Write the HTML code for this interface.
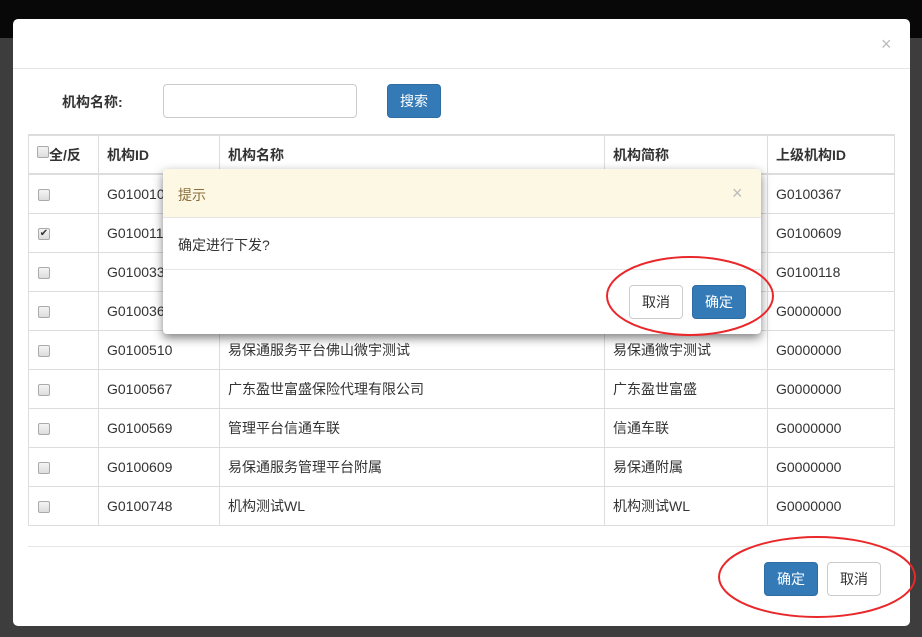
<!DOCTYPE html>
<html><head><meta charset="utf-8"><style>
*{box-sizing:border-box;margin:0;padding:0}
body{width:922px;height:637px;overflow:hidden;background:#3d3d3d;font-family:"Liberation Sans","Noto Sans CJK SC",sans-serif;font-size:14px;color:#333;position:relative}
.top{position:absolute;left:0;top:0;width:922px;height:38px;background:#080808}
.modal{position:absolute;left:13px;top:19px;width:897px;height:607px;background:#fff;border-radius:5px}
.abs{position:absolute}
.btn{position:absolute;height:34px;border-radius:4px;font-size:14px;text-align:center;line-height:32px;border:1px solid #ccc;background:#fff;color:#333}
.btn.p{background:#337ab7;border-color:#2e6da4;color:#fff}
table{position:absolute;left:28px;top:134px;border-collapse:collapse;width:867px}
td,th{border:1px solid #ddd;height:39px;padding:0 8px;text-align:left;font-weight:normal;white-space:nowrap;overflow:hidden}
th{font-weight:bold;border-top:2px solid #ddd;border-bottom:2px solid #ddd}
.cb{display:inline-block;width:12px;height:12px;border:1px solid #aaa;border-radius:2px;background:linear-gradient(#f4f4f4,#ddd);vertical-align:middle;position:relative;margin-left:1px}
.dlg{position:absolute;left:163px;top:169px;width:598px;height:165px;background:#fff;border-radius:4px;box-shadow:0 4px 10px rgba(0,0,0,.5);overflow:hidden}
</style></head><body>
<div class="top"></div>
<div class="modal"></div>
<div class="abs" style="left:13px;top:68px;width:897px;height:1px;background:#e5e5e5"></div>
<div class="abs" style="left:881px;top:34px;color:#bbb;font-size:18px">×</div>
<div class="abs" style="left:62px;top:92px;font-weight:bold">机构名称:</div>
<div class="abs" style="left:163px;top:84px;width:194px;height:34px;border:1px solid #ccc;border-radius:4px"></div>
<div class="btn p" style="left:387px;top:84px;width:54px">搜索</div>
<table>
<tr><th style="width:70px;padding:0 0 0 8px"><span class="cb" style="vertical-align:2px;margin-left:0"></span>全/反</th><th style="width:121px">机构ID</th><th style="width:385px">机构名称</th><th style="width:163px">机构简称</th><th>上级机构ID</th></tr>
<tr><td><span class="cb"></span></td><td>G0100101</td><td></td><td></td><td>G0100367</td></tr>
<tr><td><span class="cb" style="font-size:10px;line-height:10px;text-align:center">✔</span></td><td>G0100111</td><td></td><td></td><td>G0100609</td></tr>
<tr><td><span class="cb"></span></td><td>G0100331</td><td></td><td></td><td>G0100118</td></tr>
<tr><td><span class="cb"></span></td><td>G0100361</td><td></td><td></td><td>G0000000</td></tr>
<tr><td><span class="cb"></span></td><td>G0100510</td><td>易保通服务平台佛山微宇测试</td><td>易保通微宇测试</td><td>G0000000</td></tr>
<tr><td><span class="cb"></span></td><td>G0100567</td><td>广东盈世富盛保险代理有限公司</td><td>广东盈世富盛</td><td>G0000000</td></tr>
<tr><td><span class="cb"></span></td><td>G0100569</td><td>管理平台信通车联</td><td>信通车联</td><td>G0000000</td></tr>
<tr><td><span class="cb"></span></td><td>G0100609</td><td>易保通服务管理平台附属</td><td>易保通附属</td><td>G0000000</td></tr>
<tr><td><span class="cb"></span></td><td>G0100748</td><td>机构测试WL</td><td>机构测试WL</td><td>G0000000</td></tr>
</table>
<div class="abs" style="left:28px;top:546px;width:882px;height:1px;background:#e5e5e5"></div>
<div class="btn p" style="left:764px;top:562px;width:54px">确定</div>
<div class="btn" style="left:827px;top:562px;width:54px">取消</div>
<div class="dlg">
<div class="abs" style="left:0;top:0;width:598px;height:49px;background:#fcf8e3;border-bottom:1px solid #e5e5e5"></div>
<div class="abs" style="left:15px;top:16px;color:#8a6d3b">提示</div>
<div class="abs" style="left:569px;top:14px;color:#bbb;font-size:18px">×</div>
<div class="abs" style="left:15px;top:66px">确定进行下发?</div>
<div class="abs" style="left:0;top:100px;width:598px;height:1px;background:#e5e5e5"></div>
<div class="btn" style="left:466px;top:116px;width:54px">取消</div>
<div class="btn p" style="left:529px;top:116px;width:54px">确定</div>
</div>
<svg class="abs" style="left:0;top:0" width="922" height="637">
<ellipse cx="690" cy="296" rx="83" ry="39" fill="none" stroke="#e8282a" stroke-width="2"/>
<ellipse cx="817" cy="577" rx="98" ry="40" fill="none" stroke="#e8282a" stroke-width="2"/>
</svg>
</body></html>
